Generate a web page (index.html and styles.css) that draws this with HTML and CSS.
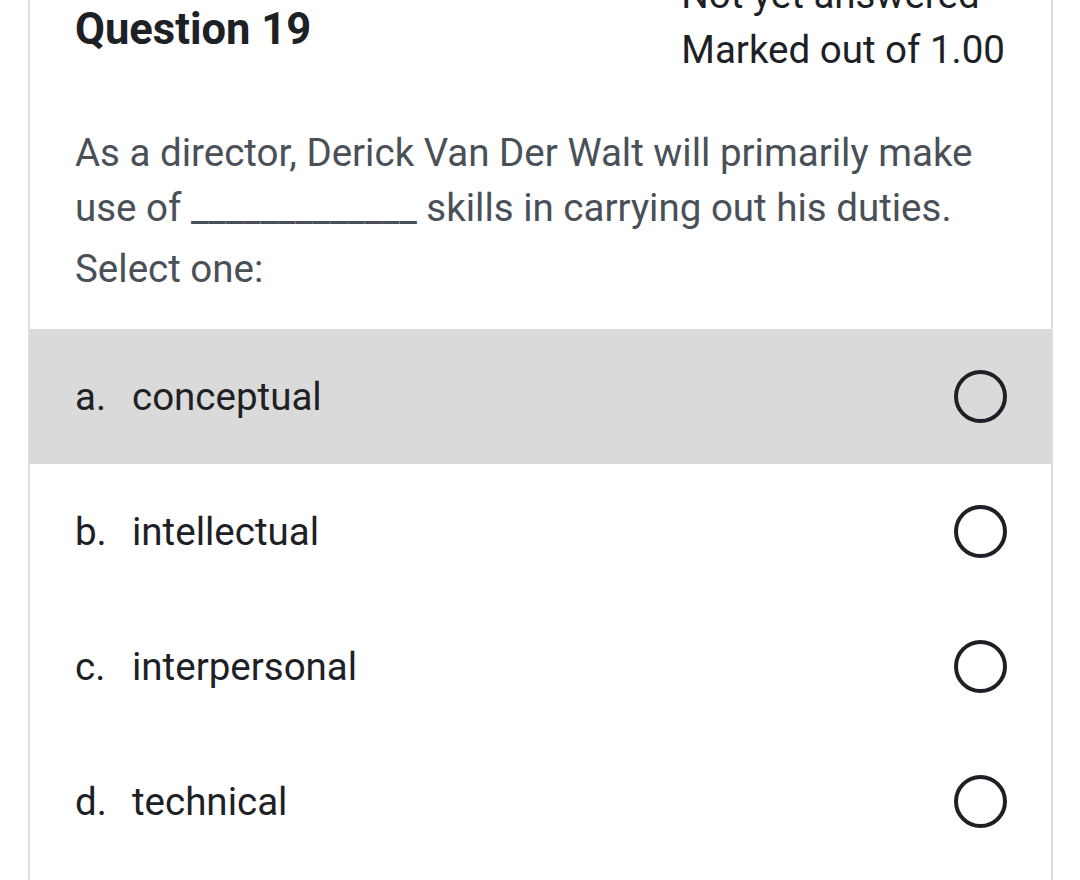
FILE: index.html
```html
<!DOCTYPE html>
<html>
<head>
    <meta charset="UTF-8">
    <title>Question 19</title>
    <link rel="stylesheet" href="styles.css">
</head>
<body>
<div class="que">
    <div class="info">
        <h3 class="qno">Question 19</h3>
        <div class="state">
            <div>Not yet answered</div>
            <div>Marked out of 1.00</div>
        </div>
    </div>

    <div class="qtext">
        <p>As a director, Derick Van Der Walt will primarily make use of _____________ skills in carrying out his duties.</p>
    </div>
    <div class="prompt">Select one:</div>

    <div class="answer">
        <label class="option selected">
            <span class="answernumber">a.</span>
            <span class="answertext">conceptual</span>
            <span class="radio"></span>
        </label>
        <label class="option">
            <span class="answernumber">b.</span>
            <span class="answertext">intellectual</span>
            <span class="radio"></span>
        </label>
        <label class="option">
            <span class="answernumber">c.</span>
            <span class="answertext">interpersonal</span>
            <span class="radio"></span>
        </label>
        <label class="option">
            <span class="answernumber">d.</span>
            <span class="answertext">technical</span>
            <span class="radio"></span>
        </label>
    </div>
</div>
</body>
</html>
```

FILE: styles.css
```css
body {
    margin: 0;
    font-family: Roboto, "Noto Sans", sans-serif;
    font-size: 38.5px;
    line-height: 55px;
    color: #1d2125;
    background-color: #ffffff;
    overflow: hidden;
}

.que {
    margin-top: -33px;
    margin-left: 28px;
    width: 1021px;
    min-height: 960px;
    border-left: 2px solid #dedede;
    border-right: 2px solid #dedede;
}

.info {
    display: flex;
    justify-content: space-between;
    align-items: flex-start;
    padding: 0 46px 0 45px;
}

.qno {
    margin: 35px 0 0 0;
    font-size: 43.5px;
    font-weight: bold;
    line-height: 55px;
    color: #1d2125;
}

.state {
    color: #1d2125;
}

.qtext {
    margin-top: 48px;
    padding: 0 46px 0 45px;
    color: #495057;
}

.qtext p {
    margin: 0;
}

.prompt {
    margin-top: 6px;
    padding: 0 45px;
    color: #495057;
}

.answer {
    margin-top: 33px;
}

.option {
    display: flex;
    align-items: center;
    height: 135px;
    padding: 0 44px 0 45px;
}

.option.selected {
    background-color: #dadada;
}

.answernumber {
    min-width: 57px;
}

.answertext {
    flex-grow: 1;
}

.radio {
    width: 45px;
    height: 45px;
    border: 4.5px solid #1d2125;
    border-radius: 50%;
}
```
